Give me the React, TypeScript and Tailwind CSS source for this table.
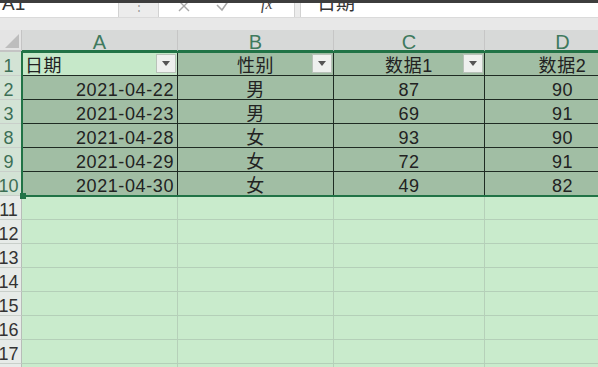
import React from 'react';

type Row = { n: number; date: string; sex: string; a: number; b: number };

const rows: Row[] = [
  { n: 2, date: '2021-04-22', sex: '男', a: 87, b: 90 },
  { n: 3, date: '2021-04-23', sex: '男', a: 69, b: 91 },
  { n: 8, date: '2021-04-28', sex: '女', a: 93, b: 90 },
  { n: 9, date: '2021-04-29', sex: '女', a: 72, b: 91 },
  { n: 10, date: '2021-04-30', sex: '女', a: 49, b: 82 },
];

const emptyRows = [11, 12, 13, 14, 15, 16, 17, 18];
const cols = ['A', 'B', 'C', 'D', 'E'];

const font = "font-['Liberation_Sans','Noto_Sans_CJK_SC',sans-serif]";

// little filter arrow shown in header cells
const FilterButton: React.FC = () => (
  <div className="absolute right-[1px] top-[2px] w-[20px] h-[19px] bg-[#eef0ee] border border-[#b9c2b9] flex items-center justify-center">
    <svg width="8" height="5" viewBox="0 0 8 5">
      <path d="M0 0 H8 L4 5 Z" fill="#555" />
    </svg>
  </div>
);

const RowHead: React.FC<{ n: number; selected?: boolean }> = ({ n, selected }) => (
  <div
    className={`flex items-end justify-center overflow-hidden border-r border-b border-r-[#b7bdb8] border-b-[#c9cfca] text-[18px] leading-[16px] pb-[1px] ${
      selected ? 'bg-[#d3e3d5] text-[#3c6f55]' : 'bg-[#e7ebe8] text-[#333]'
    }`}
  >
    <span className="-ml-[4px] whitespace-nowrap">{n}</span>
  </div>
);

const Cell: React.FC<{
  children?: React.ReactNode;
  align?: 'left' | 'right' | 'center';
  active?: boolean;
  filter?: boolean;
}> = ({ children, align = 'center', active, filter }) => {
  const justify = align === 'left' ? 'justify-start pl-[3px]' : align === 'right' ? 'justify-end pr-[3px]' : 'justify-center';
  return (
    <div
      className={`relative flex items-end ${justify} border-r border-b border-[#1f2b23] text-[18px] leading-[16px] pb-[1px] text-[#222] ${
        active ? 'bg-[#c6e8c9]' : 'bg-[#a1bea4]'
      }`}
    >
      <span className="tracking-[0.6px] whitespace-nowrap">{children}</span>
      {filter && <FilterButton />}
    </div>
  );
};

const EmptyCell: React.FC = () => (
  <div className="border-r border-b border-r-[#b6d0b9] border-b-[#b4cfb8] bg-[#c9ebcc]" />
);

export default function App() {
  return (
    <div className={`w-[598px] h-[367px] overflow-hidden bg-[#c9ebcc] ${font}`}>
      <div className="h-[3px] bg-[#3d3d3d]" />

      {/* formula bar */}
      <div className="flex h-[14px] bg-[#ececec] overflow-hidden">
        <div className="w-[119px] bg-white border-r border-[#d2d2d2] overflow-hidden">
          <div className="-mt-[9px] pl-[2px] text-[19px] leading-[20px] text-[#333]">A1</div>
        </div>
        <div className="w-[39px] flex justify-center">
          <span className="text-[#9a9a9a] text-[12px] leading-[12px] -mt-[3px]">⋮</span>
        </div>
        <div className="w-[137px] bg-white border-l border-r border-[#d2d2d2] flex items-start overflow-hidden">
          <svg className="ml-[17px] -mt-[5px]" width="16" height="16" viewBox="0 0 16 16">
            <path d="M3 3 L13 13 M13 3 L3 13" stroke="#a8a8a8" strokeWidth="1.4" />
          </svg>
          <svg className="ml-[23px] -mt-[6px]" width="16" height="16" viewBox="0 0 16 16">
            <path d="M2 8 L7 13 L14 3" stroke="#a8a8a8" strokeWidth="1.6" fill="none" />
          </svg>
          <span className="ml-[30px] -mt-[8px] italic text-[16px] leading-[18px] text-[#444] font-['Liberation_Serif',serif]">fx</span>
        </div>
        <div className="w-[5px]" />
        <div className="flex-1 bg-white border-l border-[#d2d2d2] overflow-hidden">
          <div className="-mt-[9px] pl-[16px] text-[19px] leading-[20px] text-[#333]">日期</div>
        </div>
      </div>

      <div className="h-[13px] bg-[#e8e8e8] border-t border-[#dadada]" />

      {/* sheet */}
      <div className="relative">
        <div className="grid grid-cols-[22px_156px_156px_151px_156px_156px] grid-rows-[22px] auto-rows-[24px] w-[797px]">
          {/* corner + column letters */}
          <div className="bg-[#e4e4e4] border-r border-b-2 border-r-[#c4c4c4] border-b-[#c4c4c4] flex items-end justify-end pr-[2px] pb-[2px]">
            <svg width="14" height="14" viewBox="0 0 14 14">
              <path d="M14 0 L14 14 L0 14 Z" fill="#bdbdbd" />
            </svg>
          </div>
          {cols.map((c) => (
            <div
              key={c}
              className={`flex items-center justify-center border-r border-r-[#c6c6c6] border-b-2 border-b-[#217346] text-[20px] leading-[20px] pt-[3px] ${
                c === 'E' ? 'bg-[#dcdcdc] text-[#444]' : 'bg-[#d7d9d8] text-[#3f7a5e]'
              }`}
            >
              {c}
            </div>
          ))}

          {/* header row */}
          <RowHead n={1} selected />
          <Cell align="left" active filter>日期</Cell>
          <Cell filter>性别</Cell>
          <Cell filter>数据1</Cell>
          <Cell>数据2</Cell>
          <Cell />

          {rows.map((r) => (
            <React.Fragment key={r.n}>
              <RowHead n={r.n} selected />
              <Cell align="right">{r.date}</Cell>
              <Cell>{r.sex}</Cell>
              <Cell>{r.a}</Cell>
              <Cell>{r.b}</Cell>
              <Cell />
            </React.Fragment>
          ))}

          {emptyRows.map((n) => (
            <React.Fragment key={n}>
              <RowHead n={n} />
              <EmptyCell />
              <EmptyCell />
              <EmptyCell />
              <EmptyCell />
              <EmptyCell />
            </React.Fragment>
          ))}
        </div>

        {/* selection outline and fill handle */}
        <div className="absolute left-[21px] top-[21px] w-[640px] h-[146px] border-2 border-[#217346] pointer-events-none" />
        <div className="absolute left-[20px] top-[163px] w-[6px] h-[6px] bg-[#217346] pointer-events-none" />
      </div>
    </div>
  );
}
